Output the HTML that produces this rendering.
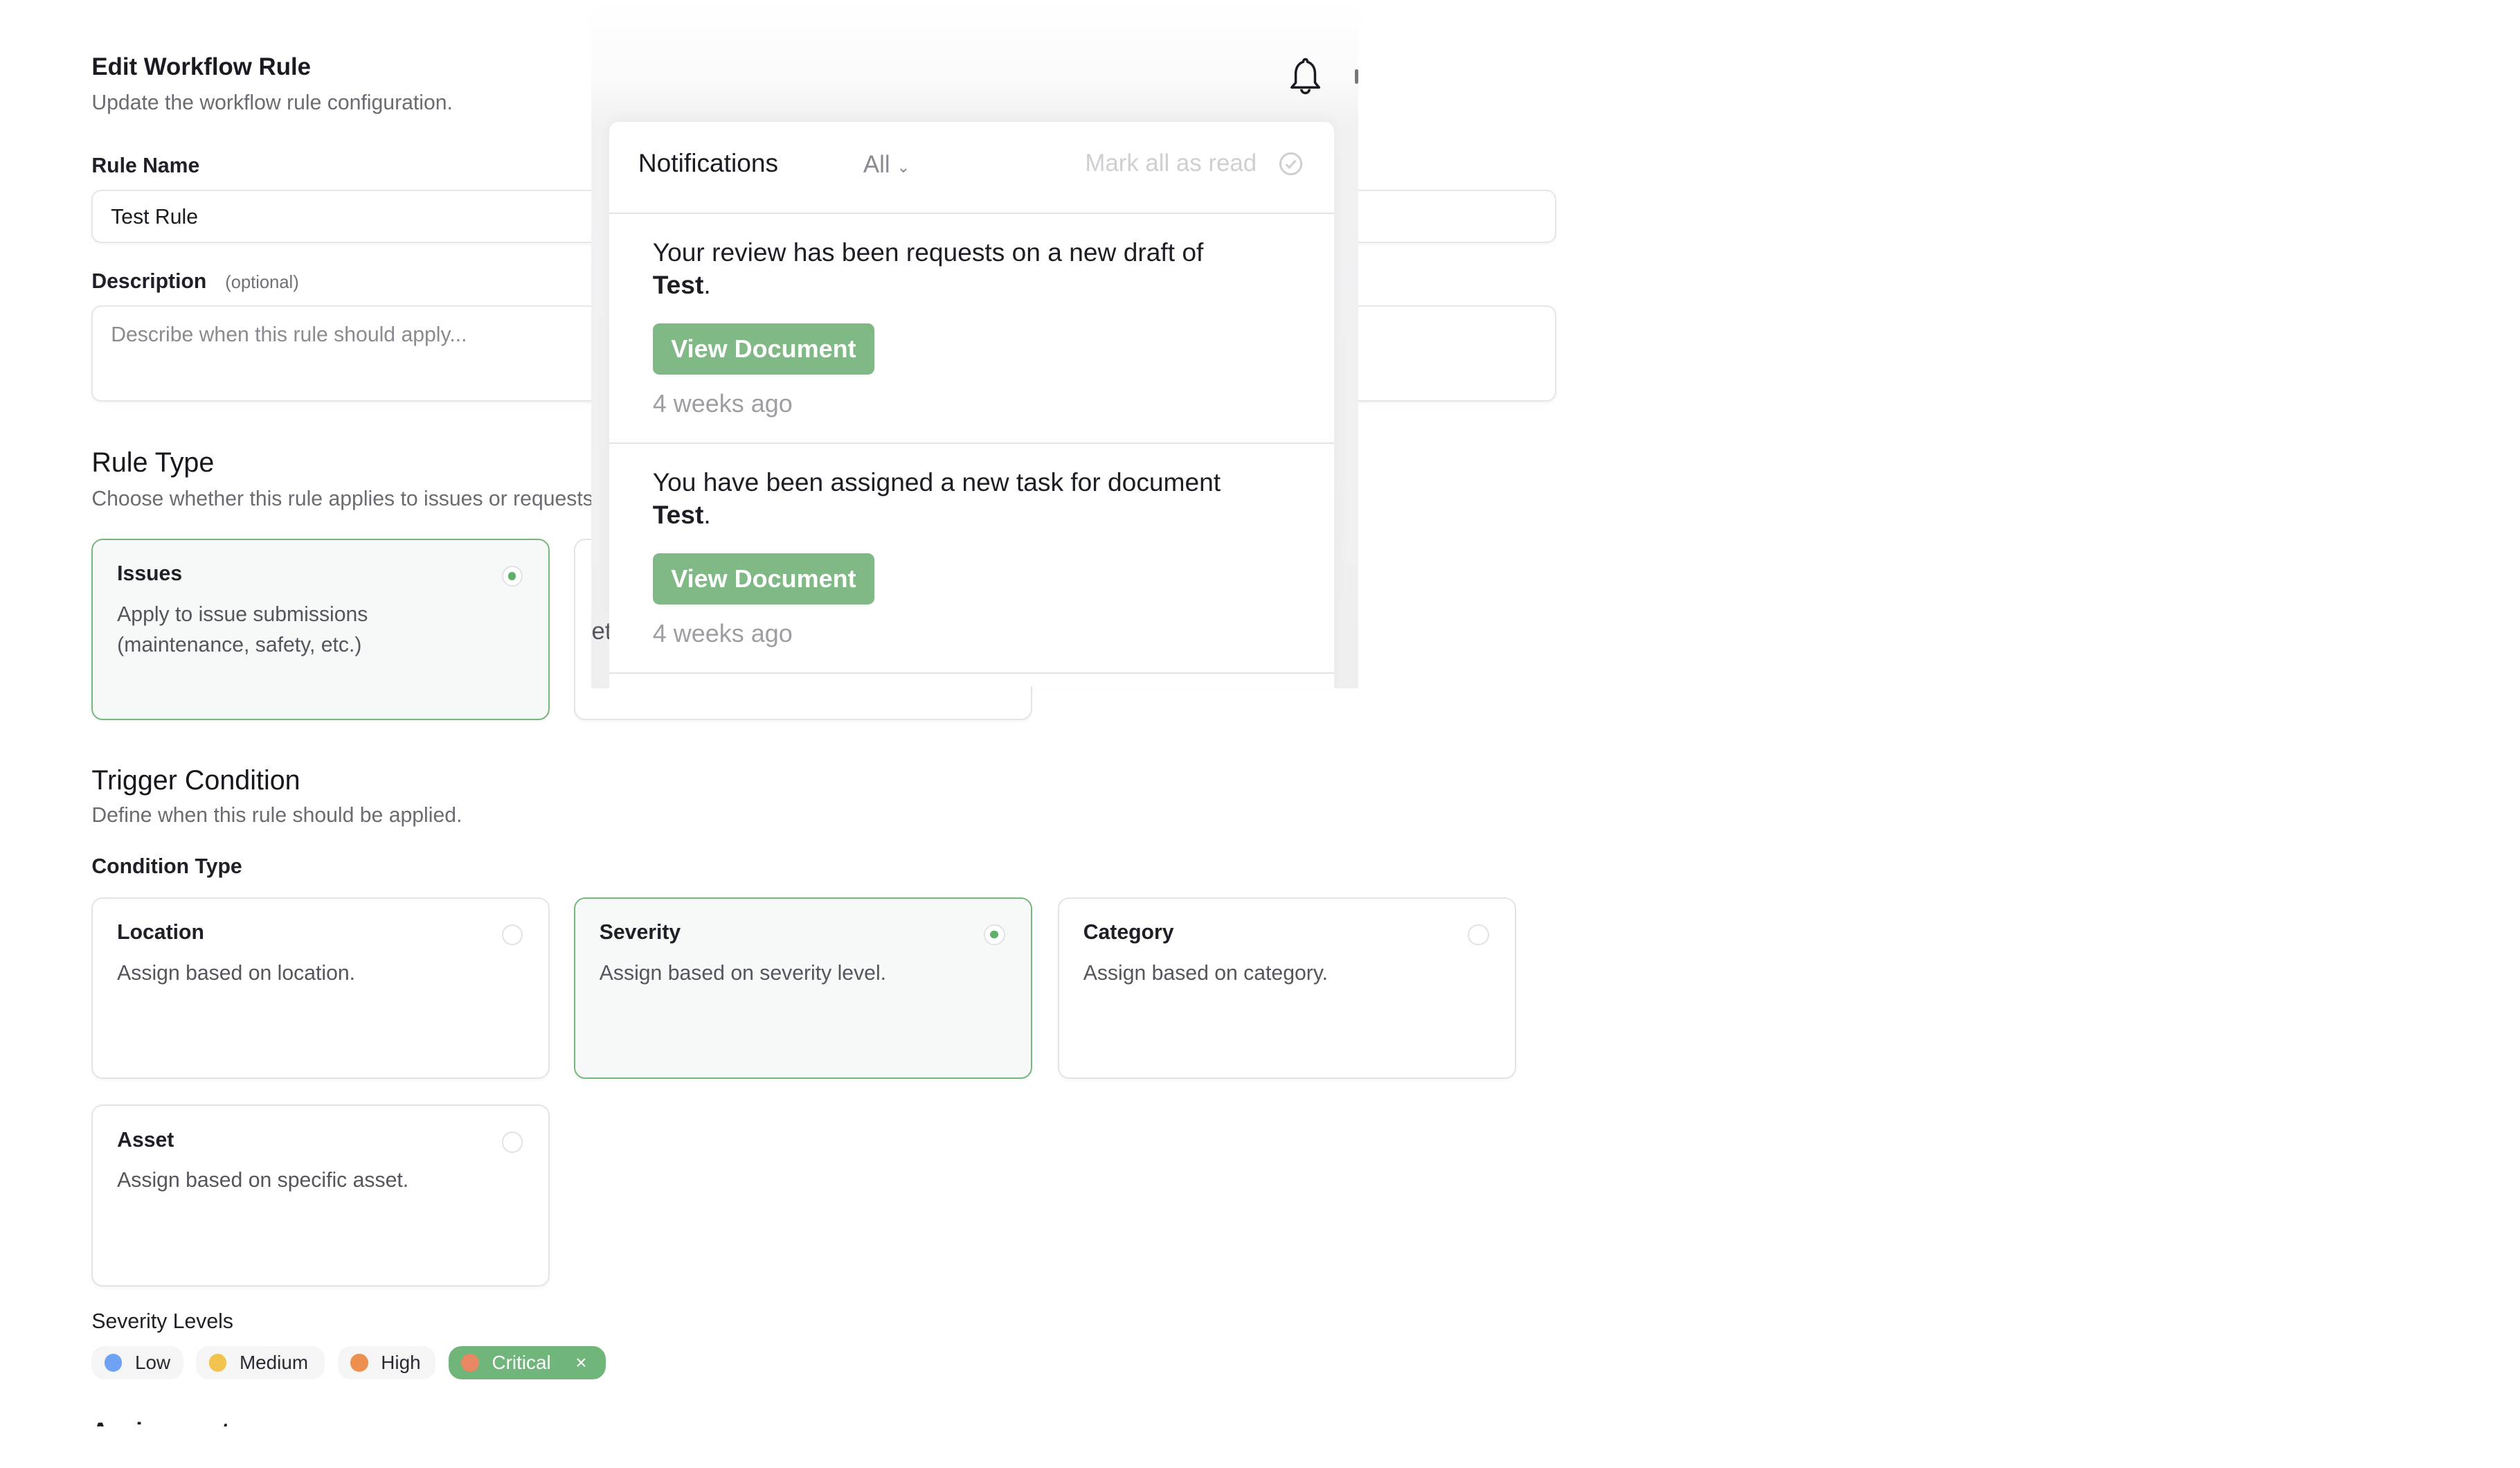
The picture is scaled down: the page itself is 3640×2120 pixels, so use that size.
<!DOCTYPE html>
<html><head><meta charset="utf-8"><style>
html,body{margin:0;padding:0;background:#fff;overflow:hidden}
body{width:3640px;height:2120px}
#r{zoom:2.322;position:relative;width:1568px;height:913px;font-family:"Liberation Sans",sans-serif;color:#1a1a22;overflow:hidden}
.a{position:absolute;white-space:nowrap}
*{box-sizing:border-box}
.lbl{font-size:13px;font-weight:600;color:#1f1f27}
.sub{font-size:13px;color:#6b6b73}
.h{font-size:17px;font-weight:500;color:#16161d}
.box{position:absolute;border:1px solid #e6e6e9;border-radius:6px;background:#fff;box-shadow:0 1px 2px rgba(0,0,0,.04)}
.card{position:absolute;border:1px solid #e4e4e7;border-radius:7px;background:#fff;width:285px;height:113px;box-shadow:0 1px 2px rgba(0,0,0,.04)}
.card.sel{border-color:#76b77b;background:#f7f9f8}
.card b{position:absolute;left:15px;top:14px;font-size:13px;font-weight:700;color:#1f1f27}
.card span{position:absolute;left:15px;top:37px;font-size:13px;color:#55555d;line-height:19px;white-space:normal;width:200px}
.rad{position:absolute;right:16px;top:16px;width:13px;height:13px;border-radius:50%;border:1px solid #e2e2e6;background:#fff}
.rad.on::after{content:"";position:absolute;left:3px;top:3px;width:5px;height:5px;border-radius:50%;background:#5fb068}
.chip{position:absolute;top:837px;height:21px;border-radius:8px;background:#f5f5f6;font-size:12px;color:#2a2a33;line-height:21px}
.chip i{position:absolute;left:8px;top:5px;width:11px;height:11px;border-radius:50%}
.chip span{position:absolute;left:27px}
.ntxt{font-size:16px;color:#1d1d25;line-height:20px}
.btn{position:absolute;width:138px;height:32px;background:#80b886;border-radius:4px;color:#fff;font-size:15.5px;font-weight:600;line-height:32px;text-align:center}
.ago{font-size:15.5px;color:#9d9da4}
</style></head><body><div id="r">
<div class="a" style="left:57px;top:33px;font-size:15px;font-weight:600">Edit Workflow Rule</div>
<div class="a sub" style="left:57px;top:57px">Update the workflow rule configuration.</div>
<div class="a lbl" style="left:57px;top:96px">Rule Name</div>
<div class="box" style="left:57px;top:118px;width:911px;height:33px"></div>
<div class="a" style="left:69px;top:128px;font-size:13px">Test Rule</div>
<div class="a lbl" style="left:57px;top:168px">Description <span style="font-size:11px;color:#707078;font-weight:400;margin-left:8px">(optional)</span></div>
<div class="box" style="left:57px;top:190px;width:911px;height:60px"></div>
<div class="a" style="left:69px;top:201px;font-size:13px;color:#8a8a92">Describe when this rule should apply...</div>
<div class="a h" style="left:57px;top:278px">Rule Type</div>
<div class="a sub" style="left:57px;top:303px">Choose whether this rule applies to issues or requests.</div>
<div class="card sel" style="left:57px;top:335px"><b>Issues</b><span>Apply to issue submissions (maintenance, safety, etc.)</span><div class="rad on"></div></div>
<div class="card" style="left:357px;top:335px"></div>
<div class="a h" style="left:57px;top:476px">Trigger Condition</div>
<div class="a sub" style="left:57px;top:500px">Define when this rule should be applied.</div>
<div class="a lbl" style="left:57px;top:532px">Condition Type</div>
<div class="card" style="left:57px;top:558px"><b>Location</b><span>Assign based on location.</span><div class="rad"></div></div>
<div class="card sel" style="left:357px;top:558px"><b>Severity</b><span>Assign based on severity level.</span><div class="rad on"></div></div>
<div class="card" style="left:658px;top:558px"><b>Category</b><span>Assign based on category.</span><div class="rad"></div></div>
<div class="card" style="left:57px;top:687px"><b>Asset</b><span>Assign based on specific asset.</span><div class="rad"></div></div>
<div class="a lbl" style="left:57px;top:815px;font-weight:500">Severity Levels</div>
<div class="chip" style="left:57px;width:57px"><i style="background:#6fa2f5"></i><span>Low</span></div>
<div class="chip" style="left:122px;width:80px"><i style="background:#f1c24c"></i><span>Medium</span></div>
<div class="chip" style="left:210px;width:61px"><i style="background:#ec8f4f"></i><span>High</span></div>
<div class="chip" style="left:279px;width:98px;background:#70b57a;color:#fff"><i style="background:#e88863"></i><span>Critical</span><span style="left:79px">×</span></div>
<div class="a h" style="left:57px;top:882px;font-size:15px;font-weight:600">Assignment</div>
<div class="a" style="left:0;top:887px;width:1568px;height:30px;background:#fff"></div>

<div class="a" style="left:368px;top:0;width:477px;height:428px;background:linear-gradient(#fff 0,#fafafa 50px,#f1f1f2 80px,#efeff0 100%)"></div>
<div class="a" style="left:379px;top:76px;width:451px;height:352px;background:#fff;border-radius:6px 6px 0 0;box-shadow:0 -2px 8px rgba(0,0,0,.04)"></div>
<div class="a" style="left:397px;top:92px;font-size:16px;font-weight:500">Notifications</div>
<div class="a" style="left:537px;top:94px;font-size:15px;color:#8a8a92">All <span style="font-size:10px">&#8964;</span></div>
<div class="a" style="left:675px;top:93px;font-size:15px;color:#cfcfd3">Mark all as read</div>
<svg class="a" style="left:795px;top:94px" width="16" height="16" viewBox="0 0 16 16"><circle cx="8" cy="8" r="6.5" fill="none" stroke="#cfcfd3" stroke-width="1.3"/><path d="M5 8.3l2 2 4-4.4" fill="none" stroke="#cfcfd3" stroke-width="1.3"/></svg>
<div class="a" style="left:379px;top:132px;width:451px;height:1px;background:#e4e4e7"></div>
<div class="a ntxt" style="left:406px;top:147px">Your review has been requests on a new draft of<br><b>Test</b>.</div>
<div class="btn" style="left:406px;top:201px">View Document</div>
<div class="a ago" style="left:406px;top:242px">4 weeks ago</div>
<div class="a" style="left:379px;top:275px;width:451px;height:1px;background:#e4e4e7"></div>
<div class="a ntxt" style="left:406px;top:290px">You have been assigned a new task for document<br><b>Test</b>.</div>
<div class="btn" style="left:406px;top:344px">View Document</div>
<div class="a ago" style="left:406px;top:385px">4 weeks ago</div>
<div class="a" style="left:379px;top:418px;width:451px;height:1px;background:#e4e4e7"></div>
<div class="a" style="left:357px;top:427px;width:285px;height:21px;border:1px solid #e4e4e7;border-top:none;border-radius:0 0 7px 7px;background:#fff"></div>
<div class="a" style="left:368px;top:380px;width:11px;height:48px;background:#efeff0"></div>
<div class="a" style="left:368px;top:384px;font-size:15px;color:#55555d;width:11px;overflow:hidden">et</div>
<svg class="a" style="left:801px;top:35px" width="22" height="26" viewBox="0 0 22 26"><path d="M11 2c-1 0-1.3.8-1.3 1.6C6.5 4.6 5 7.5 5 11v5.5L2.5 19.5h17L17 16.5V11c0-3.5-1.5-6.4-4.7-7.4C12.3 2.8 12 2 11 2z" fill="none" stroke="#1a1a22" stroke-width="1.5" stroke-linejoin="round"/><path d="M8.5 20.5a2.5 2.5 0 0 0 5 0" fill="none" stroke="#1a1a22" stroke-width="1.5"/></svg>
<div class="a" style="left:843px;top:43px;width:2px;height:9px;background:#777;border-radius:1px"></div>
</div></body></html>
